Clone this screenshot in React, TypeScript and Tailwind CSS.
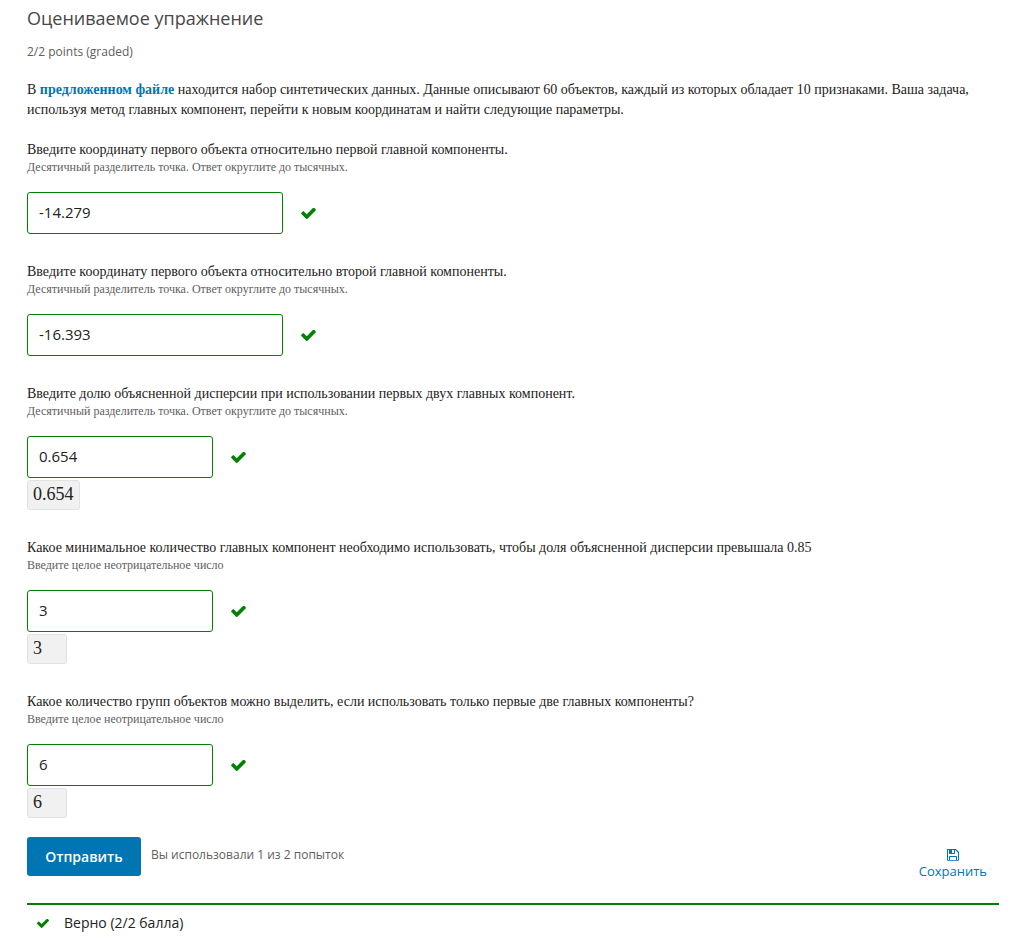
type Question = {
  id: string;
  text: string;
  hint: string;
  value: string;
  wide?: boolean;
  preview?: string;
};

const DECIMAL_HINT = "Десятичный разделитель точка. Ответ округлите до тысячных.";
const INTEGER_HINT = "Введите целое неотрицательное число";

const questions: Question[] = [
  {
    id: "first-component",
    text: "Введите координату первого объекта относительно первой главной компоненты.",
    hint: DECIMAL_HINT,
    value: "-14.279",
    wide: true,
  },
  {
    id: "second-component",
    text: "Введите координату первого объекта относительно второй главной компоненты.",
    hint: DECIMAL_HINT,
    value: "-16.393",
    wide: true,
  },
  {
    id: "explained-variance",
    text: "Введите долю объясненной дисперсии при использовании первых двух главных компонент.",
    hint: DECIMAL_HINT,
    value: "0.654",
    preview: "0.654",
  },
  {
    id: "component-count",
    text: "Какое минимальное количество главных компонент необходимо использовать, чтобы доля объясненной дисперсии превышала 0.85",
    hint: INTEGER_HINT,
    value: "3",
    preview: "3",
  },
  {
    id: "group-count",
    text: "Какое количество групп объектов можно выделить, если использовать только первые две главных компоненты?",
    hint: INTEGER_HINT,
    value: "6",
    preview: "6",
  },
];

function CheckIcon({ className }: { className: string }) {
  return (
    <svg viewBox="121 370 1550 1152" fill="currentColor" aria-hidden="true" className={className}>
      <path d="M1671 566q0 40-28 68l-724 724-136 136q-28 28-68 28t-68-28l-136-136-362-362q-28-28-28-68t28-68l136-136q28-28 68-28t68 28l294 295 656-657q28-28 68-28t68 28l136 136q28 28 28 68z" />
    </svg>
  );
}

function SaveIcon() {
  return (
    <svg viewBox="128 128 1536 1536" fill="currentColor" aria-hidden="true" className="size-3">
      <path d="M512 1536h768v-384h-768v384zm896 0h128v-896q0-14-10-38.5t-20-34.5l-281-281q-10-10-34-20t-39-10v416q0 40-28 68t-68 28h-576q-40 0-68-28t-28-68v-416h-128v1280h128v-416q0-40 28-68t68-28h832q40 0 68 28t28 68v416zm-384-928v-320q0-13-9.5-22.5t-22.5-9.5h-192q-13 0-22.5 9.5t-9.5 22.5v320q0 13 9.5 22.5t22.5 9.5h192q13 0 22.5-9.5t9.5-22.5zm640 32v896q0 40-28 68t-68 28h-1344q-40 0-68-28t-28-68v-1344q0-40 28-68t68-28h928q40 0 88 20t76 48l280 280q28 28 48 76t20 88z" />
    </svg>
  );
}

function QuestionField({ question }: { question: Question }) {
  const { id, text, hint, value, wide, preview } = question;
  return (
    <div>
      <label htmlFor={id} className="block font-['Liberation_Serif',serif] text-sm leading-5 text-[#222]">
        {text}
      </label>
      <p id={`${id}-hint`} className="font-['Liberation_Serif',serif] text-xs leading-[14px] text-[#5e5e5e]">
        {hint}
      </p>
      <div className="mt-[18px] flex items-center gap-[18px]">
        <input
          id={id}
          type="text"
          defaultValue={value}
          aria-describedby={`${id}-hint`}
          className={`h-[42px] rounded-[3px] border border-[#008100] bg-white px-[11px] pb-0.5 text-[15px] text-[#222] outline-none ${wide ? "w-64" : "w-[186px]"}`}
        />
        <CheckIcon className="h-[11px] w-[15px] text-[#008100]" />
      </div>
      {preview && (
        <div className="mt-0.5 flex h-[30px] w-fit min-w-10 items-center rounded-[3px] border border-[#e2e2e2] bg-[#f1f1f1] px-[5px] pb-0.5 font-['Liberation_Serif',serif] text-lg leading-6 text-[#222]">
          {preview}
        </div>
      )}
    </div>
  );
}

export default function App() {
  return (
    <main className="bg-white pt-1 pr-[22px] pl-[27px] font-['Open_Sans',sans-serif] text-[#222]">
      <h3 className="text-lg leading-7 text-[#474747]">Оцениваемое упражнение</h3>
      <p className="mt-2.5 text-xs leading-5 text-[#5e5e5e]">2/2 points (graded)</p>

      <form className="mt-[18px]" onSubmit={(event) => event.preventDefault()}>
        <p className="font-['Liberation_Serif',serif] text-sm leading-5">
          В{" "}
          <a href="#file" className="font-bold text-[#0075b4]">
            предложенном файле
          </a>{" "}
          находится набор синтетических данных. Данные описывают 60 объектов, каждый из которых обладает 10
          признаками. Ваша задача, используя метод главных компонент, перейти к новым координатам и найти
          следующие параметры.
        </p>

        <div className="mt-5 flex flex-col gap-7">
          {questions.map((question) => (
            <QuestionField key={question.id} question={question} />
          ))}
        </div>

        <div className="mt-[19px] flex items-start justify-between pr-3">
          <div className="flex items-start gap-2.5">
            <button
              type="submit"
              className="h-[39px] w-[114px] rounded-[3px] bg-[#0075b4] text-sm font-semibold text-white"
            >
              Отправить
            </button>
            <span className="pt-2 text-xs leading-5 text-[#5e5e5e]">Вы использовали 1 из 2 попыток</span>
          </div>
          <button type="button" className="mt-3 flex flex-col items-center text-[13px] leading-5 text-[#0075b4]">
            <SaveIcon />
            Сохранить
          </button>
        </div>
      </form>

      <div role="status" className="mt-[22px] flex items-center gap-[15px] border-t-2 border-[#008100] px-2.5 py-2 text-sm leading-5">
        <CheckIcon className="h-[9px] w-3 text-[#008100]" />
        <span>Верно (2/2 балла)</span>
      </div>
    </main>
  );
}
